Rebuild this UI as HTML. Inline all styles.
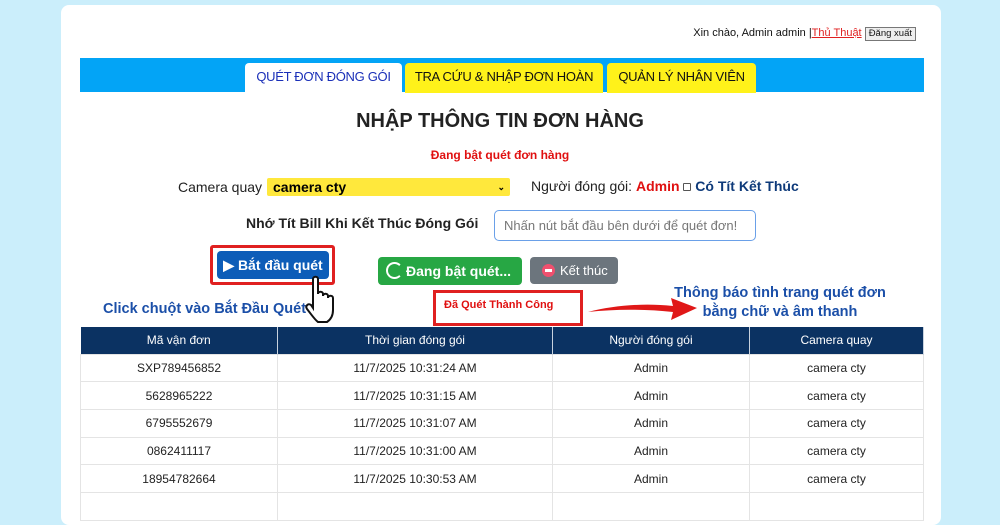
<!DOCTYPE html>
<html><head><meta charset="utf-8"><style>
*{margin:0;padding:0;box-sizing:border-box}
body{width:1000px;height:500px;background:#cbeefb;font-family:"Liberation Sans",Arial,sans-serif;position:relative;overflow:hidden}
.a{position:absolute}
.card{left:61px;top:5px;width:880px;height:520px;background:#fff;border-radius:8px}
.tab{top:63px;height:30px;font-size:13px;letter-spacing:-0.3px;text-align:center;line-height:28px;border-radius:4px 4px 0 0}
table{position:absolute;left:80px;top:327px;width:844px;border-collapse:collapse;font-size:12px;color:#222}
th{background:#0b3262;color:#fff;font-weight:normal;height:27px;border-right:1px solid #c8d2de}
td{height:27.7px;text-align:center;border:1px solid #e4e4e4}
.blue{color:#1b4fa8;font-weight:bold;font-size:14.5px}
</style></head><body>
<div class="a card"></div>
<div class="a" style="right:84px;top:27px;font-size:11px;color:#111">Xin chào, Admin admin |<span style="color:#e02020;text-decoration:underline">Thủ Thuật</span> <span style="display:inline-block;border:1px solid #777;background:#eee;font-size:9.5px;padding:0 3px;line-height:12px">Đăng xuất</span></div>
<div class="a" style="left:80px;top:58px;width:844px;height:34px;background:#03a4f6"></div>
<div class="a tab" style="left:245px;width:157px;background:#fff;color:#1a2fb8">QUÉT ĐƠN ĐÓNG GÓI</div>
<div class="a tab" style="left:405px;width:198px;background:#fff21a;color:#111">TRA CỨU &amp; NHẬP ĐƠN HOÀN</div>
<div class="a tab" style="left:607px;width:149px;background:#fff21a;color:#111">QUẢN LÝ NHÂN VIÊN</div>
<div class="a" style="left:0;width:1000px;top:110px;text-align:center;font-size:20px;font-weight:bold;color:#222">NHẬP THÔNG TIN ĐƠN HÀNG</div>
<div class="a" style="left:0;width:1000px;top:148px;text-align:center;font-size:12px;font-weight:bold;color:#e01010">Đang bật quét đơn hàng</div>
<div class="a" style="left:178px;top:179px;font-size:14px;color:#222">Camera quay</div>
<div class="a" style="left:267px;top:178px;width:243px;height:18px;background:#ffe83c;border-radius:2px;font-size:14px;font-weight:bold;padding-left:6px;line-height:18px">camera cty<span style="position:absolute;right:5px;font-size:9px">⌄</span></div>
<div class="a" style="left:531px;top:178px;font-size:14px;color:#222">Người đóng gói: <b style="color:#e01010">Admin</b> <span style="display:inline-block;width:8px;height:8px;border:1px solid #555;border-radius:1px"></span> <b style="color:#0e3a7a">Có Tít Kết Thúc</b></div>
<div class="a" style="left:246px;top:215px;font-size:14px;font-weight:bold;color:#222">Nhớ Tít Bill Khi Kết Thúc Đóng Gói</div>
<div class="a" style="left:494px;top:210px;width:262px;height:31px;border:1px solid #6aa0e8;border-radius:5px;font-size:13px;color:#777;line-height:29px;padding-left:9px">Nhấn nút bắt đầu bên dưới để quét đơn!</div>
<div class="a" style="left:210px;top:245px;width:125px;height:40px;border:3px solid #e02020;border-radius:3px"></div>
<div class="a" style="left:217px;top:251px;width:112px;height:28px;background:#0d5db8;border-radius:4px;color:#fff;font-weight:bold;font-size:14px;line-height:28px;text-align:center">▶ Bắt đầu quét</div>
<div class="a" style="left:378px;top:257px;width:144px;height:28px;background:#27a744;border-radius:4px;color:#fff;font-weight:bold;font-size:14px;line-height:28px;padding-left:28px">Đang bật quét...</div>
<div class="a" style="left:386px;top:262px;width:17px;height:17px;border:2px solid #fff;border-right-color:transparent;border-radius:50%"></div>
<div class="a" style="left:530px;top:257px;width:88px;height:27px;background:#6c757d;border-radius:4px;color:#fff;font-size:13px;line-height:27px;padding-left:30px">Kết thúc</div>
<div class="a" style="left:542px;top:264px;width:13px;height:13px;background:#f0506e;border-radius:50%"><div style="position:absolute;left:3px;top:5px;width:7px;height:3px;background:#fff"></div></div>
<div class="a blue" style="left:103px;top:301px">Click chuột vào Bắt Đầu Quét</div>
<svg class="a" style="left:304px;top:275px" width="34" height="50" viewBox="0 0 34 50"><path d="M9 4c0-3 5-3 5 0v15c0-3 5-3 5 0v2c0-3 5-3 5 0v2c0-3 5-3 5 0v12c0 6-3 10-6 12H14c-3-2-7-8-11-13-2-3 1-6 4-4l2 3z" fill="#fff" stroke="#111" stroke-width="2"/></svg>
<div class="a" style="left:433px;top:290px;width:150px;height:36px;border:3px solid #e02020"></div>
<div class="a" style="left:444px;top:299px;font-size:11px;font-weight:bold;color:#e01010">Đã Quét Thành Công</div>
<svg class="a" style="left:585px;top:291px" width="115" height="30" viewBox="0 0 115 30"><path d="M3 21C30 14 60 12 88 15L86 7 112 17 86 29 88 21C60 18 30 18 3 21z" fill="#e01818"/></svg>
<div class="a blue" style="left:670px;top:284px;width:220px;text-align:center;line-height:19px">Thông báo tình trang quét đơn<br>bằng chữ và âm thanh</div>
<table>
<tr><th style="width:197px">Mã vận đơn</th><th style="width:275px">Thời gian đóng gói</th><th style="width:197px">Người đóng gói</th><th>Camera quay</th></tr>
<tr><td>SXP789456852</td><td>11/7/2025 10:31:24 AM</td><td>Admin</td><td>camera cty</td></tr>
<tr><td>5628965222</td><td>11/7/2025 10:31:15 AM</td><td>Admin</td><td>camera cty</td></tr>
<tr><td>6795552679</td><td>11/7/2025 10:31:07 AM</td><td>Admin</td><td>camera cty</td></tr>
<tr><td>0862411117</td><td>11/7/2025 10:31:00 AM</td><td>Admin</td><td>camera cty</td></tr>
<tr><td>18954782664</td><td>11/7/2025 10:30:53 AM</td><td>Admin</td><td>camera cty</td></tr>
<tr><td></td><td></td><td></td><td></td></tr>
</table>
</body></html>
